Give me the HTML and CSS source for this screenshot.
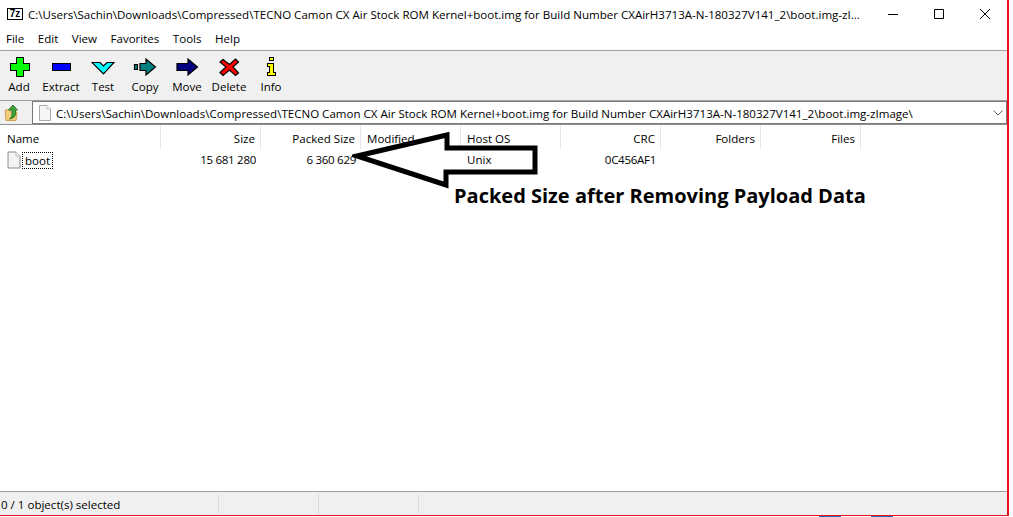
FILE: index.html
```html
<!DOCTYPE html>
<html lang="en">
<head>
    <meta charset="UTF-8">
    <title>7-Zip</title>
    <link rel="stylesheet" href="styles.css">
</head>
<body>
    <div class="window">
        <div class="titlebar">
            <span class="appicon">7z</span>
            <span class="titletext">C:\Users\Sachin\Downloads\Compressed\TECNO Camon CX Air Stock ROM Kernel+boot.img for Build Number CXAirH3713A-N-180327V141_2\boot.img-zI...</span>
            <div class="winbtns">
                <svg width="12" height="12" viewBox="0 0 12 12"><path d="M1 6.5H11" stroke="#000" fill="none"/></svg>
                <svg width="12" height="12" viewBox="0 0 12 12"><path d="M1.5 1.5H10.5V10.5H1.5Z" stroke="#000" fill="none"/></svg>
                <svg width="12" height="12" viewBox="0 0 12 12"><path d="M1 1L11 11M11 1L1 11" stroke="#000" fill="none"/></svg>
            </div>
        </div>
        <ul class="menu">
            <li>File</li>
            <li>Edit</li>
            <li>View</li>
            <li>Favorites</li>
            <li>Tools</li>
            <li>Help</li>
        </ul>
        <div class="toolbar">
            <div class="tool">
                <svg width="24" height="20" viewBox="0 0 24 20" shape-rendering="crispEdges"><path d="M9.5 .5H16.5V6.5H22.5V13.5H16.5V19.5H9.5V13.5H3.5V6.5H9.5Z" fill="#00ff00" stroke="#000" stroke-width="1.5"/></svg>
                <span>Add</span>
            </div>
            <div class="tool">
                <svg width="24" height="20" viewBox="0 0 24 20" shape-rendering="crispEdges"><path d="M3.5 6.5H21.5V13.5H3.5Z" fill="#0000ff" stroke="#000" stroke-width="1.5"/></svg>
                <span>Extract</span>
            </div>
            <div class="tool">
                <svg width="24" height="20" viewBox="0 0 24 20"><path d="M1 5.5H9L12.5 9L16 5.5H23L12.5 17Z" fill="#00ffff" stroke="#000" stroke-width="1.2"/></svg>
                <span>Test</span>
            </div>
            <div class="tool">
                <svg width="24" height="20" viewBox="0 0 24 20"><path d="M1.5 7.5H4.5V12.5H1.5ZM7 6.5H13V2L22.5 10L13 18V13.5H7Z" fill="#008080" stroke="#000" stroke-width="1.2"/></svg>
                <span>Copy</span>
            </div>
            <div class="tool">
                <svg width="24" height="20" viewBox="0 0 24 20"><path d="M2 6.5H13V2L22.5 10L13 18V13.5H2Z" fill="#000080" stroke="#000" stroke-width="1.2"/></svg>
                <span>Move</span>
            </div>
            <div class="tool">
                <svg width="24" height="20" viewBox="0 0 24 20"><path d="M6 2.5L12.5 7.5L18.5 2L21.5 5L16 10L21.5 16L18.5 18.5L12.5 13L6 18.5L3 15.5L9 10L3 5Z" fill="#ff0000" stroke="#000" stroke-width="1.2"/></svg>
                <span>Delete</span>
            </div>
            <div class="tool">
                <svg width="24" height="20" viewBox="0 0 24 20" shape-rendering="crispEdges"><path d="M10.5 0.5H14.5V3.5H10.5ZM8.5 6.5H14.5V15.5H16.5V18.5H8.5V15.5H10.5V9.5H8.5Z" fill="#ffff00" stroke="#000" stroke-width="1.4"/></svg>
                <span>Info</span>
            </div>
        </div>
        <div class="addressrow">
            <svg class="upicon" width="18" height="18" viewBox="0 0 18 18">
                <path d="M2 6H7L8 8H14L13 16.5H3Z" fill="#f0cf7c" stroke="#c9a04f"/>
                <path d="M10 1L14.5 6H12.5V10.5C12.5 12.5 10 14.5 6.5 15C8.5 13.5 9 12 9 10V6H5.5Z" fill="#3fa33a" stroke="#1c6b1a" stroke-width=".8"/>
            </svg>
            <div class="address">
                <svg class="fileicon" width="14" height="18" viewBox="0 0 14 18"><path d="M1.5 1.5H9L12.5 5V16.5H1.5Z" fill="#f6f6f6" stroke="#a9a9a9"/><path d="M9 1.5V5H12.5" fill="#fff" stroke="#c4c4c4"/></svg>
                <span class="path">C:\Users\Sachin\Downloads\Compressed\TECNO Camon CX Air Stock ROM Kernel+boot.img for Build Number CXAirH3713A-N-180327V141_2\boot.img-zImage\</span>
                <svg class="chevron" width="10" height="6" viewBox="0 0 10 6"><path d="M.5 .5L5 5L9.5 .5" fill="none" stroke="#666"/></svg>
            </div>
        </div>
        <div class="list">
            <div class="cols head">
                <div class="col name">Name</div>
                <div class="col num">Size</div>
                <div class="col num">Packed Size</div>
                <div class="col">Modified</div>
                <div class="col">Host OS</div>
                <div class="col num">CRC</div>
                <div class="col num">Folders</div>
                <div class="col num">Files</div>
            </div>
            <div class="cols row">
                <div class="col name">
                    <svg width="14" height="18" viewBox="0 0 14 18"><path d="M1 1H9L13 5V17H1Z" fill="#f4f4f4" stroke="#8c8c8c"/><path d="M9 1V5H13" fill="#fff" stroke="#b5b5b5"/></svg>
                    <span class="focus">boot</span>
                </div>
                <div class="col num">15 681 280</div>
                <div class="col num">6 360 629</div>
                <div class="col"></div>
                <div class="col">Unix</div>
                <div class="col num">0C456AF1</div>
                <div class="col num"></div>
                <div class="col num"></div>
            </div>
            <svg class="arrow" width="190" height="60" viewBox="0 0 190 60">
                <path d="M5 25L95 4V17H183V41H94V54Z" fill="none" stroke="#000" stroke-width="5" stroke-linejoin="miter"/>
            </svg>
            <div class="note">Packed Size after Removing Payload Data</div>
        </div>
        <div class="statusbar">
            <div class="cell first">0 / 1 object(s) selected</div>
            <div class="cell"></div>
            <div class="cell"></div>
        </div>
    </div>
    <div class="taskbar">
        <i></i>
        <i></i>
    </div>
</body>
</html>
```
FILE: styles.css
```css
* {
    box-sizing: border-box;
}
body {
    margin: 0;
    width: 1013px;
    height: 517px;
    overflow: hidden;
    background-color: #fff;
    font-family: "Open Sans", "Liberation Sans", sans-serif;
    font-size: 11.55px;
    color: #000;
}
.window {
    width: 1009px;
    height: 516px;
    display: flex;
    flex-direction: column;
    border-right: 2px solid #e81123;
    border-bottom: 1px solid #e81123;
}
.titlebar {
    height: 26px;
    display: flex;
    align-items: center;
    padding: 2px 16px 0 7px;
    flex-shrink: 0;
}
.appicon {
    width: 16px;
    height: 12px;
    border: 1px solid #000;
    background-color: #fff;
    font-family: "Liberation Sans", sans-serif;
    font-size: 10px;
    font-weight: bold;
    line-height: 10px;
    text-align: center;
}
.titletext {
    margin-left: 5px;
    flex: 1;
    white-space: nowrap;
}
.winbtns {
    display: flex;
    gap: 34px;
}
.menu {
    list-style: none;
    margin: 0;
    padding: 0 0 0 6px;
    height: 24px;
    display: flex;
    gap: 13.5px;
    align-items: center;
    flex-shrink: 0;
}
.toolbar {
    height: 50px;
    display: flex;
    flex-shrink: 0;
    margin-left: -2px;
    padding-top: 6px;
    background-color: #f0f0f0;
    border-top: 1px solid #a0a0a0;
}
.tool {
    width: 42px;
    display: flex;
    flex-direction: column;
    align-items: center;
    gap: 2px;
}
.addressrow {
    height: 25px;
    display: flex;
    flex-shrink: 0;
    align-items: center;
    background-color: #f0f0f0;
    border-top: 1px solid #a0a0a0;
    border-bottom: 1px solid #8f8f8f;
    padding-left: 3px;
}
.upicon {
    flex-shrink: 0;
}
.address {
    margin-left: 11px;
    flex: 1;
    height: 23px;
    display: flex;
    align-items: center;
    padding-left: 5px;
    padding-top: 1px;
    background-color: #fff;
    border: 1px solid #7a7a7a;
}
.path {
    margin-left: 4px;
    flex: 1;
    white-space: nowrap;
}
.chevron {
    margin-right: 3px;
}
.list {
    flex: 1;
    position: relative;
    background-color: #fff;
}
.cols {
    display: flex;
}
.head {
    height: 24px;
}
.head .col {
    border-right: 1px solid #e5e5e5;
    line-height: 28px;
}
.head .col.name {
    padding-top: 3px;
}
.row {
    height: 22px;
    line-height: 22px;
}
.row .num {
    letter-spacing: -.3px;
}
.col {
    width: 100px;
    padding: 0 5px 0 6px;
    white-space: nowrap;
}
.col.name {
    width: 161px;
    padding-left: 7px;
    display: flex;
    align-items: center;
}
.num {
    text-align: right;
}
.focus {
    margin-left: 1px;
    padding: 0 2px;
    height: 17px;
    line-height: 15px;
    border: 1px dotted #000;
}
.arrow {
    position: absolute;
    left: 352px;
    top: 6px;
}
.note {
    position: absolute;
    left: 454px;
    top: 57px;
    font-size: 20px;
    font-weight: bold;
    white-space: nowrap;
}
.statusbar {
    height: 24px;
    display: flex;
    flex-shrink: 0;
    align-items: center;
    background-color: #f0f0f0;
    border-top: 1px solid #a0a0a0;
}
.cell {
    width: 100px;
    height: 20px;
    line-height: 22px;
    border-right: 1px solid #dcdcdc;
}
.cell.first {
    width: 219px;
    padding-left: 1px;
}
.taskbar {
    display: flex;
    gap: 30px;
    padding-left: 819px;
}
.taskbar i {
    width: 22px;
    height: 1px;
    background-color: #2a6fa8;
}
```
